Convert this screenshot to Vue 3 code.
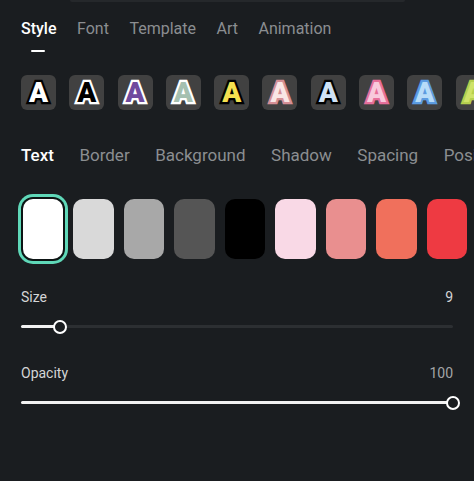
<template>
  <div class="panel">
    <div class="top-sliver"></div>

    <div class="tabs main-tabs">
      <div v-for="(tab, i) in mainTabs" :key="tab" class="tab" :class="{ active: i === 0 }">{{ tab }}</div>
    </div>

    <div class="presets">
      <div v-for="(p, i) in presets" :key="i" class="preset">
        <span class="glyph" :style="{ color: p.fill, WebkitTextStrokeColor: p.stroke }">A</span>
      </div>
    </div>

    <div class="tabs sub-tabs">
      <div v-for="(tab, i) in subTabs" :key="tab" class="tab" :class="{ active: i === 0 }">{{ tab }}</div>
    </div>

    <div class="swatches">
      <div v-for="(c, i) in swatches" :key="c" class="swatch" :class="{ selected: i === 0 }" :style="{ background: c }"></div>
    </div>

    <div class="control size-control">
      <div class="control-head">
        <span>Size</span>
        <span>9</span>
      </div>
      <div class="slider">
        <div class="fill" :style="{ width: '9%' }"></div>
        <div class="thumb" :style="{ left: '9%' }"></div>
      </div>
    </div>

    <div class="control opacity-control">
      <div class="control-head">
        <span>Opacity</span>
        <span class="muted">100</span>
      </div>
      <div class="slider">
        <div class="fill" :style="{ width: '100%' }"></div>
        <div class="thumb" :style="{ left: '100%' }"></div>
      </div>
    </div>
  </div>
</template>

<script setup>
const mainTabs = ['Style', 'Font', 'Template', 'Art', 'Animation'];
const subTabs = ['Text', 'Border', 'Background', 'Shadow', 'Spacing', 'Position'];

const presets = [
  { fill: '#ffffff', stroke: '#000000' },
  { fill: '#000000', stroke: '#ffffff' },
  { fill: '#6f4a9e', stroke: '#ffffff' },
  { fill: '#a5c0b0', stroke: '#ffffff' },
  { fill: '#f5e04f', stroke: '#000000' },
  { fill: '#f9e6e6', stroke: '#d58f95' },
  { fill: '#cfe2f5', stroke: '#000000' },
  { fill: '#f8c9dc', stroke: '#e66f9a' },
  { fill: '#b7dcf8', stroke: '#5b9be0' },
  { fill: '#cfe368', stroke: '#b5cf4e' },
];

const swatches = ['#ffffff', '#d9d9d9', '#a8a8a8', '#555555', '#000000', '#f9d9e6', '#e98f8f', '#f0705c', '#ee3a42'];
</script>

<style>
html, body {
  margin: 0;
  background: #1a1d20;
}
</style>

<style scoped>
.panel {
  width: 474px;
  height: 481px;
  overflow: hidden;
  background: #1a1d20;
  font-family: Roboto, "Liberation Sans", sans-serif;
  box-sizing: border-box;
}

.top-sliver {
  width: 335px;
  height: 2px;
  margin-left: 70px;
  background: #25282b;
  border-radius: 0 0 4px 4px;
}

.tabs {
  display: flex;
  padding-left: 21px;
  white-space: nowrap;
  line-height: 20px;
  color: #8b8e91;
}

.tab {
  position: relative;
  flex: none;
}

.tab.active {
  color: #fff;
  font-weight: 500;
}

.main-tabs {
  gap: 20.5px;
  margin-top: 17px;
  height: 56px;
  font-size: 16px;
}

.main-tabs .tab.active::after {
  content: "";
  position: absolute;
  left: 10px;
  top: 31px;
  width: 14px;
  height: 2px;
  border-radius: 1px;
  background: #fff;
}

.presets {
  display: flex;
  gap: 13.3px;
  padding-left: 21px;
}

.preset {
  flex: none;
  width: 35px;
  height: 35px;
  border-radius: 6px;
  background: #414141;
  display: flex;
  align-items: center;
  justify-content: center;
}

.glyph {
  font-size: 28px;
  line-height: 1;
  font-weight: 900;
  -webkit-text-stroke-width: 4.5px;
  paint-order: stroke fill;
}

.sub-tabs {
  gap: 25.5px;
  margin-top: 35px;
  height: 20px;
  font-size: 17px;
}

.swatches {
  display: flex;
  gap: 10px;
  padding-left: 22.5px;
  margin-top: 34px;
}

.swatch {
  flex: none;
  width: 40.5px;
  height: 60px;
  border-radius: 10px;
}

.swatch.selected {
  box-shadow: 0 0 0 2px #0d1414, 0 0 0 5px #5fd8b8;
}

.control {
  padding: 0 21px;
}

.size-control {
  margin-top: 29px;
}

.opacity-control {
  margin-top: 36px;
}

.control-head {
  display: flex;
  justify-content: space-between;
  font-size: 14px;
  line-height: 18px;
  color: #d4d5d6;
}

.muted {
  color: #a3a5a7;
}

.slider {
  position: relative;
  height: 3px;
  margin-top: 19px;
  border-radius: 2px;
  background: #2c2f32;
}

.fill {
  height: 100%;
  border-radius: 2px;
  background: #f2f2f2;
}

.thumb {
  position: absolute;
  top: 50%;
  width: 14px;
  height: 14px;
  box-sizing: border-box;
  border: 2px solid #fff;
  border-radius: 50%;
  background: #1a1d20;
  transform: translate(-50%, -50%);
}
</style>
